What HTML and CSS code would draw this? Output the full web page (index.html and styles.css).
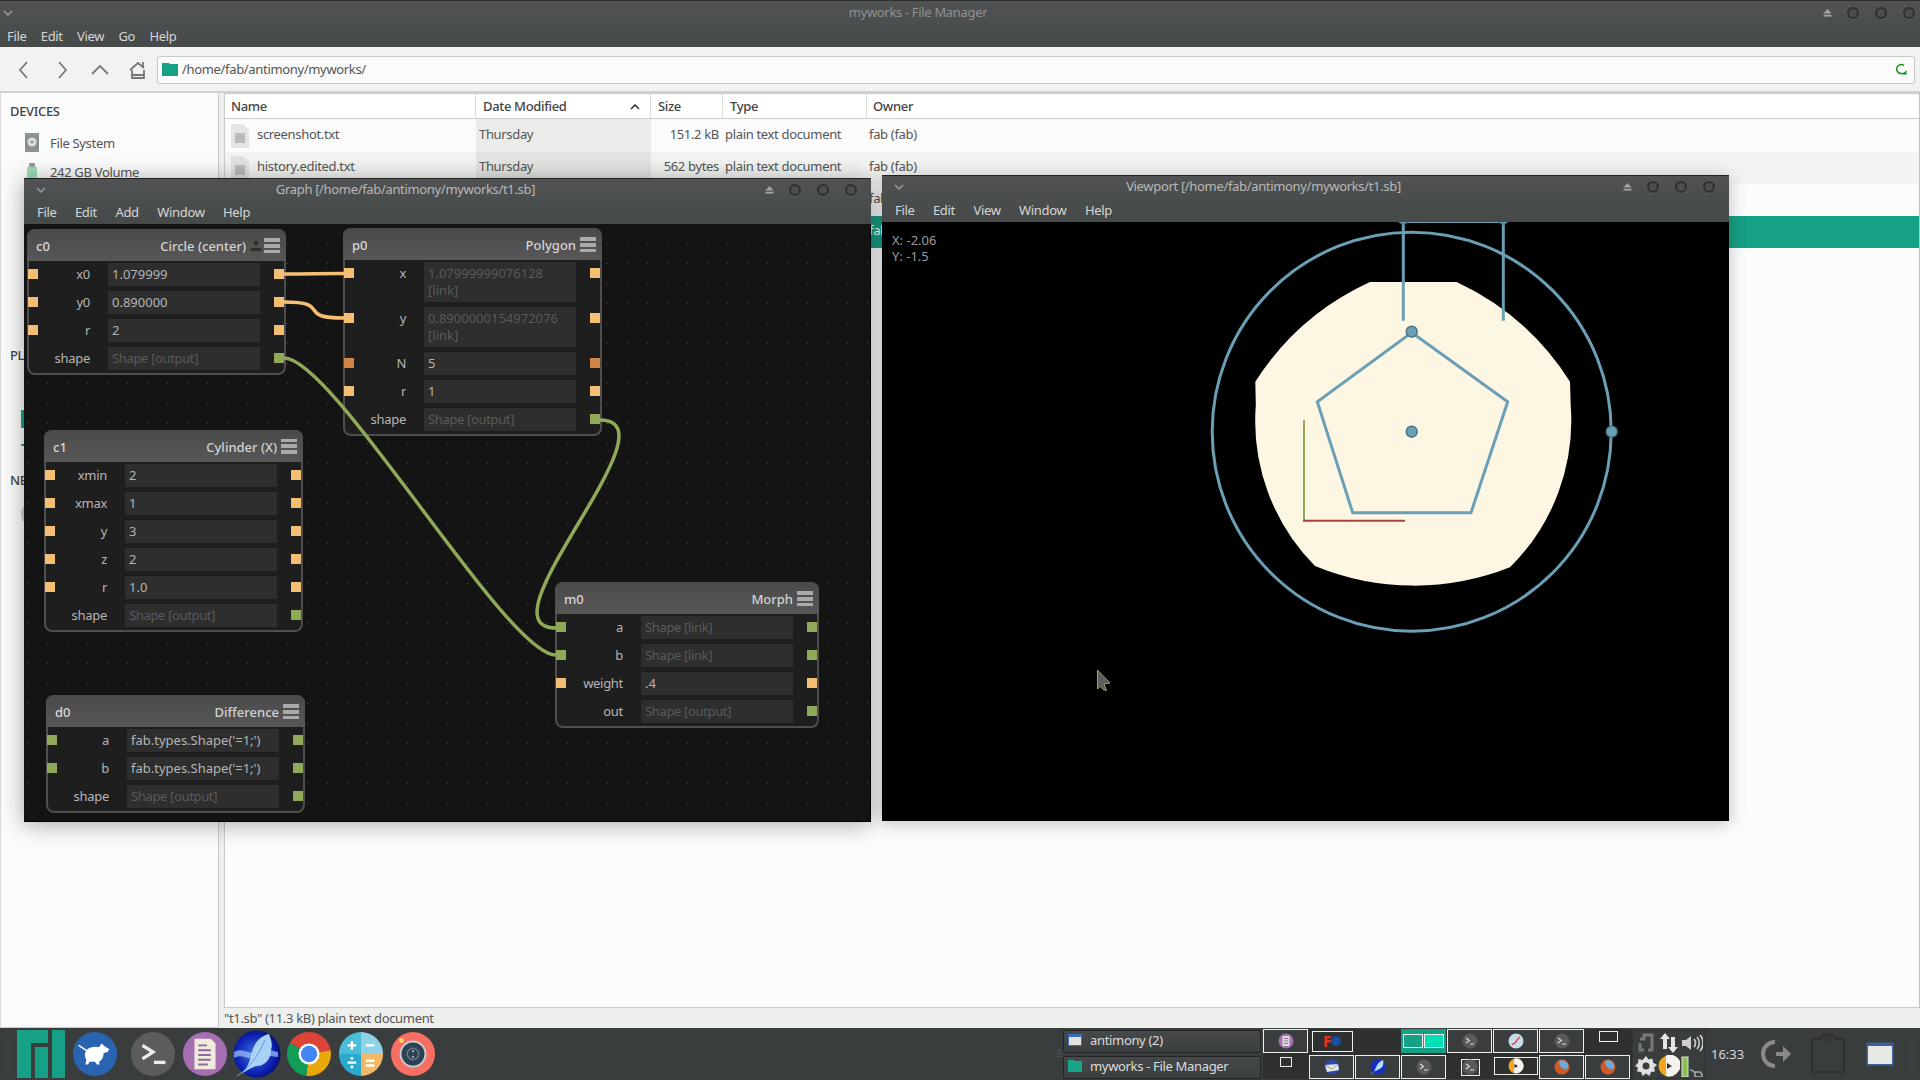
FILE: index.html
```html
<!DOCTYPE html>
<html lang="en">
<head>
<meta charset="utf-8">
<title>myworks - File Manager</title>
<link rel="stylesheet" href="styles.css">
</head>
<body>
<svg class="defs" aria-hidden="true">
  <symbol id="i-doc" viewBox="-8 -8 16 16"><circle r="7.500" fill="#a56fb2"/><path d="M-3.500-5H3.500V5H-3.500z" fill="#ddd"/><path d="M-2-2.500H2M-2 0H2M-2 2.500H2" stroke="#8d6a9a"/></symbol>
  <symbol id="i-term" viewBox="-8 -8 16 16"><circle r="7.500" fill="#5a5a5a"/><path d="M-4-3L-.5-.5-4 2M0 3H4" stroke="#ddd" stroke-width="1.100" fill="none"/></symbol>
  <symbol id="i-edit" viewBox="-8 -8 16 16"><circle r="7.500" fill="#c9dde8"/><path d="M-4 4c2-3 3-1 4-3s1-3 4-5M-1 2l3-4" stroke="#d0343a" stroke-width="1.200" fill="none"/></symbol>
  <symbol id="i-mail" viewBox="-8 -8 16 16"><circle r="7.500" fill="#2f47ad"/><path d="M-7-2L6-3 7 3-5 5z" fill="#e8e8df"/><path d="M-7-2L0 2 6-3" stroke="#777" stroke-width=".7" fill="none"/></symbol>
  <symbol id="i-sea" viewBox="-8 -8 16 16"><circle r="7.500" fill="#1530c0"/><path d="M-8 8C-4 6-3 3-2 0 0-4 2-6 5-7c1 3 0 7-2 8-2 2-6 2-11 7z" fill="#b9dcf7"/></symbol>
  <symbol id="i-fox" viewBox="-8 -8 16 16"><circle r="7.500" fill="#d05a26"/><path d="M-3-6C0-8 5-6 6-2c1 3-1 5-4 4C-1 1-3-2-3-6z" fill="#6bacdf"/></symbol>
  <symbol id="i-play" viewBox="-8 -8 16 16"><circle r="7.500" fill="#f2a51d"/><path d="M-2-7.300A7.500 7.500 0 0 1 5 5.500 7.500 7.500 0 0 1-2 7z" fill="#f5f3ee"/><path d="M-1.500-2L2 0-1.500 2z" fill="#222"/></symbol>
</svg>
<div class="desktop">
  <section class="fm">
    <header class="fm-head">
      <div class="titlebar">
        <svg class="chev" viewBox="0 0 10 6"><path d="M1 1l4 4 4-4"/></svg>
        <span class="title dim">myworks - File Manager</span>
        <div class="win-btns">
          <svg class="eject" viewBox="0 0 10 9"><path d="M5 0l4.500 5H.5z"/><rect x=".5" y="6.500" width="9" height="2"/></svg>
          <i class="dot"></i><i class="dot"></i><i class="dot"></i>
        </div>
      </div>
      <nav class="menu menu-fm"><span>File</span><span>Edit</span><span>View</span><span>Go</span><span>Help</span></nav>
    </header>
    <div class="toolbar">
      <div class="tools">
        <svg viewBox="0 0 20 20"><path d="M13 2L6 10l7 8"/></svg>
        <svg viewBox="0 0 20 20"><path d="M7 2l7 8-7 8"/></svg>
        <svg viewBox="0 0 20 20"><path d="M2 14l8-8 8 8"/></svg>
        <svg viewBox="0 0 20 20"><path d="M2 10l8-7 6 5M15 2v6M4 10v8h12v-8M4 15h12"/></svg>
      </div>
      <div class="address">
        <svg class="folder" viewBox="0 0 16 14"><path d="M0 1h7l1 1h8v12H0z"/></svg>
        <span class="path">/home/fab/antimony/myworks/</span>
        <svg class="reload" viewBox="0 0 12 12"><path d="M9 2.500A4.500 4.500 0 1 0 6 10.500h5"/><path class="fill" d="M11.500 7v4.500H7.500z"/></svg>
      </div>
    </div>
    <div class="fm-body">
      <aside class="sidebar">
        <h3 class="side-head">DEVICES</h3>
        <div class="side-item">
          <svg class="side-ico" viewBox="0 0 14 19"><rect width="14" height="19" fill="#8c9290"/><circle cx="7" cy="9" r="4.500" fill="#dde0de"/><circle cx="7" cy="9" r="1.500" fill="#8c9290"/></svg>
          <span>File System</span>
        </div>
        <div class="side-item">
          <svg class="side-ico" viewBox="0 0 14 19"><rect x="2" y="5" width="10" height="14" fill="#9adbb4"/><rect x="4" y="1" width="6" height="4" fill="#9a9a9a"/></svg>
          <span>242 GB Volume</span>
        </div>
        <h3 class="side-head side-places">PLACES</h3>
        <div class="side-mark"></div>
        <div class="side-mark side-mark-thin"></div>
        <h3 class="side-head side-net">NETWORK</h3>
        <div class="side-round"></div>
      </aside>
      <div class="list-pane">
        <div class="table">
          <div class="row row-head">
            <span class="c-name">Name</span>
            <span class="c-date">Date Modified<svg class="sort" viewBox="0 0 10 6"><path d="M1 5l4-4 4 4"/></svg></span>
            <span class="c-size">Size</span>
            <span class="c-type">Type</span>
            <span class="c-owner">Owner</span>
          </div>
          <div class="row odd">
            <span class="c-name"><svg class="file" viewBox="0 0 18 24"><path d="M0 0h12l6 6v18H0z" fill="#e4e5e4"/><rect x="4" y="9" width="10" height="10" fill="#b9bab9"/></svg>screenshot.txt</span>
            <span class="c-date shade1">Thursday</span>
            <span class="c-size num">151.2 kB</span>
            <span class="c-type">plain text document</span>
            <span class="c-owner">fab (fab)</span>
          </div>
          <div class="row even">
            <span class="c-name"><svg class="file" viewBox="0 0 18 24"><path d="M0 0h12l6 6v18H0z" fill="#e0e1e0"/><rect x="4" y="9" width="10" height="10" fill="#b9bab9"/></svg>history.edited.txt</span>
            <span class="c-date shade2">Thursday</span>
            <span class="c-size num">562 bytes</span>
            <span class="c-type">plain text document</span>
            <span class="c-owner">fab (fab)</span>
          </div>
          <div class="row odd">
            <span class="c-name"></span>
            <span class="c-date shade1"></span>
            <span class="c-size"></span>
            <span class="c-type"></span>
            <span class="c-owner">fab (fab)</span>
          </div>
          <div class="row selected">
            <span class="c-name"></span>
            <span class="c-date"></span>
            <span class="c-size"></span>
            <span class="c-type"></span>
            <span class="c-owner">fab (fab)</span>
          </div>
        </div>
        <div class="status">"t1.sb" (11.3 kB) plain text document</div>
      </div>
    </div>
  </section>

  <section class="window win-graph">
    <div class="titlebar">
      <svg class="chev" viewBox="0 0 10 6"><path d="M1 1l4 4 4-4"/></svg>
      <span class="title">Graph [/home/fab/antimony/myworks/t1.sb]</span>
      <div class="win-btns">
        <svg class="eject" viewBox="0 0 10 9"><path d="M5 0l4.500 5H.5z"/><rect x=".5" y="6.500" width="9" height="2"/></svg>
        <i class="dot"></i><i class="dot"></i><i class="dot"></i>
      </div>
    </div>
    <nav class="menu"><span>File</span><span>Edit</span><span>Add</span><span>Window</span><span>Help</span></nav>
    <div class="canvas">
      <article class="node node-c0">
        <header class="node-head"><b>c0</b><span class="node-type">Circle (center)</span><i class="lock"></i><i class="burger"></i></header>
        <div class="node-body">
          <div class="prow"><i class="port fl"></i><label>x0</label><div class="field">1.079999</div><i class="port fl"></i></div>
          <div class="prow"><i class="port fl"></i><label>y0</label><div class="field">0.890000</div><i class="port fl"></i></div>
          <div class="prow"><i class="port fl"></i><label>r</label><div class="field">2</div><i class="port fl"></i></div>
          <div class="prow"><i class="port hidden"></i><label>shape</label><div class="field off txt">Shape [output]</div><i class="port sh"></i></div>
        </div>
      </article>
      <article class="node node-p0">
        <header class="node-head"><b>p0</b><span class="node-type">Polygon</span><i class="burger"></i></header>
        <div class="node-body">
          <div class="prow"><i class="port fl"></i><label>x</label><div class="field off">1.07999999076128<br>[link]</div><i class="port fl"></i></div>
          <div class="prow"><i class="port fl"></i><label>y</label><div class="field off">0.8900000154972076<br>[link]</div><i class="port fl"></i></div>
          <div class="prow"><i class="port in"></i><label>N</label><div class="field">5</div><i class="port in"></i></div>
          <div class="prow"><i class="port fl"></i><label>r</label><div class="field">1</div><i class="port fl"></i></div>
          <div class="prow"><i class="port hidden"></i><label>shape</label><div class="field off txt">Shape [output]</div><i class="port sh"></i></div>
        </div>
      </article>
      <article class="node node-c1">
        <header class="node-head"><b>c1</b><span class="node-type">Cylinder (X)</span><i class="burger"></i></header>
        <div class="node-body">
          <div class="prow"><i class="port fl"></i><label>xmin</label><div class="field">2</div><i class="port fl"></i></div>
          <div class="prow"><i class="port fl"></i><label>xmax</label><div class="field">1</div><i class="port fl"></i></div>
          <div class="prow"><i class="port fl"></i><label>y</label><div class="field">3</div><i class="port fl"></i></div>
          <div class="prow"><i class="port fl"></i><label>z</label><div class="field">2</div><i class="port fl"></i></div>
          <div class="prow"><i class="port fl"></i><label>r</label><div class="field">1.0</div><i class="port fl"></i></div>
          <div class="prow"><i class="port hidden"></i><label>shape</label><div class="field off txt">Shape [output]</div><i class="port sh"></i></div>
        </div>
      </article>
      <article class="node node-d0">
        <header class="node-head"><b>d0</b><span class="node-type">Difference</span><i class="burger"></i></header>
        <div class="node-body">
          <div class="prow"><i class="port sh"></i><label>a</label><div class="field">fab.types.Shape('=1;')</div><i class="port sh"></i></div>
          <div class="prow"><i class="port sh"></i><label>b</label><div class="field">fab.types.Shape('=1;')</div><i class="port sh"></i></div>
          <div class="prow"><i class="port hidden"></i><label>shape</label><div class="field off txt">Shape [output]</div><i class="port sh"></i></div>
        </div>
      </article>
      <article class="node node-m0">
        <header class="node-head"><b>m0</b><span class="node-type">Morph</span><i class="burger"></i></header>
        <div class="node-body">
          <div class="prow"><i class="port sh"></i><label>a</label><div class="field off txt">Shape [link]</div><i class="port sh"></i></div>
          <div class="prow"><i class="port sh"></i><label>b</label><div class="field off txt">Shape [link]</div><i class="port sh"></i></div>
          <div class="prow"><i class="port fl"></i><label>weight</label><div class="field">.4</div><i class="port fl"></i></div>
          <div class="prow"><i class="port hidden"></i><label>out</label><div class="field off txt">Shape [output]</div><i class="port sh"></i></div>
        </div>
      </article>
      <svg class="wires" viewBox="24 224 847 598">
        <path class="w-o" d="M284 274C314 274 314 273.500 344 273.500"/>
        <path class="w-o" d="M284 302C334 302 294 318 344 318"/>
        <path class="w-g" d="M284 358C334 358 506 655 556 655"/>
        <path class="w-g" d="M600 420C680 420 476 628 556 628"/>
      </svg>
    </div>
  </section>

  <section class="window win-view">
    <div class="titlebar">
      <svg class="chev" viewBox="0 0 10 6"><path d="M1 1l4 4 4-4"/></svg>
      <span class="title">Viewport [/home/fab/antimony/myworks/t1.sb]</span>
      <div class="win-btns">
        <svg class="eject" viewBox="0 0 10 9"><path d="M5 0l4.500 5H.5z"/><rect x=".5" y="6.500" width="9" height="2"/></svg>
        <i class="dot"></i><i class="dot"></i><i class="dot"></i>
      </div>
    </div>
    <nav class="menu"><span>File</span><span>Edit</span><span>View</span><span>Window</span><span>Help</span></nav>
    <div class="view">
      <div class="coords">X: -2.06<br>Y: -1.5</div>
      <svg class="scene" viewBox="882 222 847 599">
        <path class="shape" d="M1370 282L1456.700 282A268 268 0 0 1 1570 381.700L1570.700 405A206 206 0 0 1 1510 567.300A260 260 0 0 1 1315 566A206 206 0 0 1 1255.800 405L1255.300 381.700A268 268 0 0 1 1370 282Z"/>
        <path class="ax-g" d="M1304 420v101.500"/>
        <path class="ax-r" d="M1303 520.700h102"/>
        <circle class="ln" cx="1411.700" cy="431.700" r="199.500"/>
        <polygon class="ln" points="1411.700,332.500 1507.700,401.700 1471,512.700 1352.700,512.700 1317.300,401.700"/>
        <path class="ln" d="M1403.300 222v98.700M1503.300 222v98.700"/>
        <path class="ln-thin" d="M1403.300 222.500h100"/>
        <circle class="hd" cx="1403.300" cy="219" r="5"/>
        <circle class="hd" cx="1503.300" cy="219" r="5"/>
        <circle class="hd" cx="1411.700" cy="331.700" r="5.500"/>
        <circle class="hd" cx="1411.700" cy="431.700" r="5.500"/>
        <circle class="hd" cx="1611.700" cy="431.700" r="5.500"/>
        <path class="cursor" d="M1097.500 670L1110 683L1104 684L1106.500 690.500L1103 689.500L1100.500 686L1097.500 689Z"/>
      </svg>
    </div>
  </section>

  <footer class="panel">
    <div class="grip"></div>
    <div class="dock">
      <svg class="manjaro" viewBox="0 0 48 48"><path d="M0 0h31v13H14v35H0zM18 17h13v31H18zM35 0h13v48H35z"/></svg>
      <svg class="app app-mouse" viewBox="-24 -24 48 48"><circle r="23" fill="#2a64b0"/><path d="M-17-9l9 6" stroke="#fff" stroke-width="1.500" fill="none"/><path d="M-9-4c4-4 10-4 13-3l3-4 3 3 5 3-2 3-4 1c0 4-2 8-5 9l1 3h-3l-2-3-6 0-1 3h-3l1-5c-2-3-2-7 0-10z" fill="#fff"/></svg>
      <svg class="app" viewBox="-24 -24 48 48"><circle r="23" fill="#5c5c5c"/><path d="M-11-9L0-2l-11 7" stroke="#ececec" stroke-width="3.500" fill="none"/><rect x="1" y="7" width="12" height="3.500" fill="#ececec"/></svg>
      <svg class="app" viewBox="-24 -24 48 48"><circle r="23" fill="#a56fb2"/><path d="M-11-16H6l5 5v27h-22z" fill="#efeadb"/><path d="M-7-9H2M-7-4H6M-7 1H6M-7 6H6M-7 11H3" stroke="#8d6a9a" stroke-width="2"/></svg>
      <svg class="app app-sea" viewBox="-24 -24 48 48"><defs><radialGradient id="sea" cx=".45" cy=".5" r=".6"><stop offset="0" stop-color="#3f6fe0"/><stop offset=".7" stop-color="#0a1fb0"/><stop offset="1" stop-color="#04085e"/></radialGradient></defs><circle r="23.500" fill="url(#sea)"/><path d="M-23-2c8-5 14 3 22 0s14-2 22 0v5c-8-1-14-2-22 1s-14-5-22 0z" fill="#9fc4f5" opacity=".7"/><path d="M-24 24C-12 20-8 10-6 2-4-8 0-17 12-20c2 6 4 10 2 16 0 8-5 16-15 16-8 3-14 8-23 12z" fill="#a9d2f5"/><path d="M-20 22C-8 14 0 4 8-14" stroke="#5f9ae0" stroke-width="1" fill="none"/></svg>
      <svg class="app" viewBox="-24 -24 48 48"><path d="M0 0L-20-11.500A23 23 0 0 1 22.600-4z" fill="#db4437"/><path d="M0 0L22.600-4A23 23 0 0 1-3 22.800z" fill="#e8a80c"/><path d="M0 0L-3 22.800A23 23 0 0 1-20-11.500z" fill="#0f9d58"/><circle r="11" fill="#fff"/><circle r="8.500" fill="#4285f4"/></svg>
      <svg class="app" viewBox="-24 -24 48 48"><path d="M0 0V-23A23 23 0 0 0-23 0z" fill="#4bbdd8"/><path d="M0 0V-23A23 23 0 0 1 23 0z" fill="#8cd3e8"/><path d="M0 0H-23A23 23 0 0 0 0 23z" fill="#2ba9cd"/><path d="M0 0H23A23 23 0 0 1 0 23z" fill="#f2b866"/><path d="M-14-9H-5M-9.500-13.500V-4.500M5-9H14M5 7H14M5 12H14M-14 9H-5" stroke="#fff" stroke-width="2.500" fill="none"/><circle cx="-9.500" cy="4.500" r="1.500" fill="#fff"/><circle cx="-9.500" cy="13.500" r="1.500" fill="#fff"/></svg>
      <svg class="app" viewBox="-24 -24 48 48"><circle r="23" fill="#f76e63"/><circle r="13" fill="#2d4152" stroke="#c7cfd4" stroke-width="2"/><circle r="6" fill="none" stroke="#66798a" stroke-width="1.500"/><circle cy="-3" r="1.200" fill="#aab"/><circle cy="3" r="1.200" fill="#aab"/><circle cx="-12" cy="-14" r="2.500" fill="#f7d75a"/></svg>
    </div>
    <div class="tasks">
      <i class="grip-small"></i>
      <div class="task-col">
        <div class="task"><svg viewBox="0 0 14 12"><rect width="14" height="12" fill="#3a6cc0"/><rect x="1" y="3" width="12" height="8" fill="#e5e5e0"/></svg>antimony (2)</div>
        <div class="task"><svg viewBox="0 0 14 12"><path d="M0 0h6l1 1h7v11H0z" fill="#17a589"/></svg>myworks - File Manager</div>
      </div>
    </div>
    <div class="pager">
      <div class="pager-row">
        <div class="cell boxed"><svg class="mini"><use href="#i-doc"/></svg></div>
        <div class="cell"><span class="box-in fbox"><b class="mini-f">F</b><i class="mini-gear"></i></span></div>
        <div class="cell"></div>
        <div class="cell cur"><span class="ws"></span><span class="ws ws-on"></span></div>
        <div class="cell boxed"><svg class="mini"><use href="#i-term"/></svg></div>
        <div class="cell boxed"><svg class="mini"><use href="#i-edit"/></svg></div>
        <div class="cell boxed"><svg class="mini"><use href="#i-term"/></svg></div>
        <div class="cell top"><span class="box-in small-wide"></span></div>
      </div>
      <div class="pager-row">
        <div class="cell top"><span class="box-in small-sq"></span></div>
        <div class="cell boxed"><svg class="mini"><use href="#i-mail"/></svg></div>
        <div class="cell boxed"><svg class="mini"><use href="#i-sea"/></svg></div>
        <div class="cell boxed"><svg class="mini"><use href="#i-term"/></svg></div>
        <div class="cell"><span class="box-in sbox"><svg class="mini"><use href="#i-term"/></svg></span></div>
        <div class="cell top"><span class="box-in ybox"><svg class="mini"><use href="#i-play"/></svg></span></div>
        <div class="cell boxed"><svg class="mini"><use href="#i-fox"/></svg></div>
        <div class="cell boxed"><svg class="mini"><use href="#i-fox"/></svg></div>
      </div>
    </div>
    <div class="tray">
      <svg viewBox="0 0 22 22"><path d="M5 7h4V3h8v15h-4M5 11v7h4" fill="none" stroke="#777" stroke-width="3"/></svg>
      <svg viewBox="0 0 22 22"><path d="M7 1l5 6H9v10H5V7H2zM15 21l-5-6h3V5h4v10h3z" fill="#e6e6e6"/></svg>
      <svg viewBox="0 0 22 22"><path d="M1 8h4l5-4v14l-5-4H1z" fill="#cfcfcf"/><path d="M13 7c2 2 2 6 0 8M16 5c3 3 3 9 0 12M19 3c4 4 4 12 0 16" stroke="#cfcfcf" stroke-width="1.600" fill="none"/></svg>
      <svg viewBox="0 0 22 22"><path d="M11 1l2.500 3.500 4-1 .5 4 4 2.500-3 2.500 1 4-4 .5-1.500 4-3.500-2.500-3.500 2.500-1.500-4-4-.5 1-4L0 11l3-3 .5-4 4 1z" fill="#e0e0e0"/><circle cx="11" cy="11" r="3.500" fill="#3a3d3d"/></svg>
      <svg viewBox="-11 -11 22 22"><circle r="10.500" fill="#f2a51d"/><path d="M-3-10.500A10.500 10.500 0 0 1 7.500 7.500 10.500 10.500 0 0 1-3 10z" fill="#f5f3ee"/><path d="M-2-3l5 3-5 3z" fill="#333"/></svg>
      <svg viewBox="0 0 22 22"><rect x="1" y="2" width="6" height="20" fill="#8cc152" stroke="#ddd"/><path d="M9 15c2 0 3 0 4 2h6l2 2v3h-7v-5" fill="none" stroke="#aaa" stroke-width="1.500"/></svg>
    </div>
    <div class="clock">16:33</div>
    <svg class="logout" viewBox="0 0 30 28"><path d="M14 2A12 12 0 0 0 14 26" fill="none" stroke="#8a8a8a" stroke-width="4"/><path d="M15 12h7V6l8 8-8 8v-6h-7z" fill="#8a8a8a"/></svg>
    <svg class="clip" viewBox="0 0 34 40"><path d="M1 5h9a7 5 0 0 1 14 0h9v33H1z" fill="none" stroke="#2b2d2d" stroke-width="1.500"/><circle cx="17" cy="5" r="2.500" fill="none" stroke="#2b2d2d"/></svg>
    <svg class="winicon" viewBox="0 0 28 24"><rect width="28" height="24" fill="#4a71b8" opacity=".35"/><rect x="1" y="1" width="26" height="22" fill="#3f6fc0" opacity=".6"/><rect x="2" y="4" width="24" height="18" fill="#e6e8e4"/></svg>
    <div class="grip grip-right"></div>
  </footer>
</div>
</body>
</html>
```
FILE: styles.css
```css
* { box-sizing: border-box; }
html, body { margin: 0; width: 1920px; height: 1080px; overflow: hidden; }
body { font-family: "Noto Sans", "Open Sans", sans-serif; font-size: 13px; letter-spacing: -.33px; color: #444; background: #eef0ee; }
.defs { position: absolute; width: 0; height: 0; }
.desktop { position: relative; width: 1920px; height: 1080px; display: flex; flex-direction: column; }

/* file manager */
.fm { height: 1028px; display: flex; flex-direction: column; }
.fm-head { height: 47px; background: linear-gradient(#505253, #464a49); border-top: 1px solid #2d2e2e; flex: none; }
.titlebar { position: relative; height: 22px; display: flex; align-items: center; justify-content: center; padding: 0 84px 2px 0; }
.fm-head .titlebar { height: 23px; }
.title { color: #b8b8b8; font-size: 13px; white-space: nowrap; }
.title.dim { color: #8f9090; }
.chev { position: absolute; left: 3px; top: 50%; width: 10px; height: 6px; margin-top: -3px; fill: none; stroke: #999; stroke-width: 1.500; }
.win-btns { position: absolute; right: 5px; top: 0; bottom: 0; display: flex; align-items: center; gap: 16px; }
.eject { width: 9px; height: 8px; fill: #a5a5a5; margin-right: -1px; }
.dot { display: block; width: 12px; height: 12px; border-radius: 50%; background: #4b4d4e; border: 2px solid #2e3030; box-shadow: 0 1px 0 #5a5c5c; }
.menu { height: 23px; display: flex; align-items: center; gap: 18.500px; padding-left: 13px; color: #d6d6d6; font-size: 13px; }
.menu-fm { gap: 14.300px; padding-left: 7px; }

.toolbar { height: 46px; flex: none; display: flex; align-items: center; background: #f1f3f1; border-bottom: 2px solid #cfd1cf; padding-top: 1px; }
.tools { display: flex; width: 157px; padding-left: 14px; gap: 18px; flex: none; }
.tools svg { width: 20px; height: 20px; fill: none; stroke: #777; stroke-width: 1.800; }
.address { flex: 1; margin-right: 5px; height: 28px; border: 1px solid #c8cac8; border-radius: 2px; background: #fafbfa; display: flex; align-items: center; padding: 0 7px 2px 4px; color: #555; }
.folder { width: 16px; height: 14px; fill: #16a085; margin-right: 4px; }
.path { flex: 1; }
.reload { width: 12px; height: 12px; fill: none; stroke: #15931f; stroke-width: 1.500; }
.reload .fill { fill: #15931f; stroke: none; }

.fm-body { flex: 1; display: flex; background: #eef0ee; min-height: 0; }
.sidebar { width: 219px; flex: none; position: relative; background: #fbfbfb; border-right: 1px solid #c9cbc9; border-left: 1px solid #d8d8d8; border-bottom: 1px solid #c9cbc9; padding: 9px 0 0 9px; }
.side-head { margin: 0; font-size: 13px; font-weight: 500; color: #444; line-height: 18px; }
.side-item { display: flex; align-items: center; gap: 11px; height: 29px; padding-left: 15px; color: #555; }
.side-item:first-of-type { margin-top: 8px; }
.side-ico { width: 14px; height: 19px; flex: none; }
.side-places { position: absolute; left: 9px; top: 253px; }
.side-net { position: absolute; left: 9px; top: 378px; }
.side-mark { position: absolute; left: 20px; top: 317px; width: 8px; height: 18px; background: #16a085; }
.side-mark-thin { top: 351px; height: 2px; }
.side-round { position: absolute; left: 20px; top: 412px; width: 10px; height: 18px; border-radius: 50%; background: #d9cfd3; }

.list-pane { flex: 1; display: flex; flex-direction: column; margin-left: 5px; min-width: 0; }
.table { flex: 1; background: #fbfcfb; border: 1px solid #c9cbc9; border-right-color: #c0c2c0; }
.row { display: grid; grid-template-columns: 251px 175px 72px 144px 1fr; height: 32px; align-items: stretch; color: #555; }
.row > span { display: flex; align-items: center; padding: 0 0 4px 3px; white-space: nowrap; }
.row > .c-owner { padding-left: 2px; }
.row-head { height: 25px; background: #fff; border-bottom: 1px solid #cdcfcd; color: #444; font-weight: 500; }
.row-head > span { border-right: 1px solid #dcdedc; padding: 0 0 0 7px; position: relative; }
.row-head .c-name { padding-left: 5px; }
.row-head > .c-owner { border-right: 0; padding-left: 6px; }
.row > .c-name { padding-left: 6px; }
.row > .c-type { padding-left: 2px; }
.row-head > .c-type { padding-left: 7px; }
.row-head + .row { height: 33px; }
.odd { background: #fafbfa; }
.even { background: #f2f4f2; }
.shade1 { background: #e9ece9; }
.shade2 { background: #e2e5e1; }
.row > .num { justify-content: flex-end; padding-right: 4px; }
.selected { background: #16a085; color: #fff; }
.file { width: 18px; height: 24px; margin: 4px 8px 0 0; flex: none; }
.sort { position: absolute; right: 10px; top: 10px; width: 10px; height: 6px; fill: none; stroke: #333; stroke-width: 1.600; }
.status { height: 20px; flex: none; line-height: 20px; color: #555; margin-top: -1px; padding-top: 1px; box-sizing: content-box; }

/* floating windows */
.window { position: absolute; display: flex; flex-direction: column; background: linear-gradient(#505253, #464a49 40px); border-top: 1px solid #222; box-shadow: 0 2px 22px rgba(0,0,0,.35); }
.win-graph { left: 24px; top: 178px; width: 847px; height: 644px; }
.win-graph .titlebar { height: 21px; }
.win-graph .menu { height: 24px; }
.win-view { left: 882px; top: 175px; width: 847px; height: 646px; box-shadow: 0 2px 16px rgba(0,0,0,.25); }
.win-view .titlebar { height: 22px; }
.win-view .menu { height: 24px; }
.window .chev { left: 12px; }
.window .win-btns { right: 14px; }

.canvas { position: relative; flex: 1; overflow: hidden; background-color: #141414; background-image: radial-gradient(circle at 3.500px 19.500px, #4a4a4a .8px, transparent 1px); background-size: 20px 20px; border-right: 1px solid #000; border-bottom: 1px solid #000; letter-spacing: 0; }
.wires { position: absolute; left: 0; top: 0; width: 847px; height: 598px; fill: none; pointer-events: none; }
.w-o { stroke: #f4bf75; stroke-width: 3.500; }
.w-g { stroke: #90a959; stroke-width: 3.500; }

/* nodes */
.node { position: absolute; display: flex; flex-direction: column; border-radius: 8px; background: #1e1e1e; border: 2px solid #4e4e4e; border-top: 0; color: #b5b5b5; }
.node-c0 { left: 3px; top: 5px; }
.node-p0 { left: 319px; top: 4px; }
.node-c1 { left: 20px; top: 206px; }
.node-d0 { left: 22px; top: 471px; }
.node-m0 { left: 531px; top: 358px; }
.node-head { height: 32px; margin: 0 -2px; padding: 1px 6px 0 9px; border-radius: 8px 8px 0 0; display: flex; align-items: center; background: linear-gradient(#4a4a4a, #575757); color: #d8d8d8; }
.node-head b { font-weight: 500; flex: 1; }
.node-type { font-weight: 500; color: #d2d2d2; }
.burger { display: block; width: 16px; height: 15px; margin-left: 4px; background: linear-gradient(#aaa 0 3.500px, transparent 3.500px 5.500px, #aaa 5.500px 9.500px, transparent 9.500px 11.500px, #aaa 11.500px); }
.lock { display: block; width: 10px; height: 11px; margin-left: 5px; margin-right: -1px; background: radial-gradient(circle at 5px 3px, #2e2e2e 2px, transparent 2.500px), linear-gradient(transparent 8px, #2e2e2e 8px); }
.node-body { display: flex; flex-direction: column; gap: 5px; padding: 1.500px 1px 3px 0; }
.prow { display: flex; align-items: flex-start; }
.port { display: block; width: 10px; height: 10px; margin: 6.500px -1px 0; flex: none; }
.port.fl { background: #f4bf75; }
.port.in { background: #d28445; }
.port.sh { background: #90a959; }
.port.hidden { visibility: hidden; }
.prow label { width: 52px; margin-right: 18px; text-align: right; line-height: 23px; margin-left: 1px; letter-spacing: -.3px; }
.node-m0 .prow label { width: 57px; }
.field { width: 152px; min-height: 23px; padding: 3px 4px; background: #2e2e2e; color: #b5b5b5; line-height: 17px; margin-right: 15px; white-space: nowrap; overflow: hidden; }
.field.off { color: #5a5a5a; }
.field.txt { letter-spacing: -.35px; }

/* viewport */
.view { position: relative; flex: 1; background: #000; overflow: hidden; letter-spacing: 0; }
.coords { position: absolute; left: 10px; top: 10px; color: #9a9a9a; font-size: 13px; line-height: 16px; }
.scene { display: block; width: 847px; height: 599px; }
.shape { fill: #fdf6e3; }
.ln { fill: none; stroke: #6a9fb5; stroke-width: 3; }
.ln-thin { fill: none; stroke: #6a9fb5; stroke-width: 1; }
.hd { fill: #6a9fb5; stroke: #4b7587; stroke-width: 1.500; }
.ax-g { stroke: #90a959; stroke-width: 2; }
.ax-r { stroke: #ac4142; stroke-width: 2; }
.cursor { fill: #5c5c5c; stroke: #90a959; stroke-width: 1; }

/* bottom panel */
.panel { height: 52px; flex: none; display: flex; align-items: center; background: #3a3d3d; position: relative; }
.grip { width: 6px; height: 27px; margin-left: 5px; flex: none; background-image: radial-gradient(circle, #555 .8px, transparent 1px); background-size: 3px 3px; }
.dock { display: flex; align-items: center; margin-left: 6px; width: 1040px; flex: none; }
.manjaro { width: 48px; height: 48px; fill: #16a085; margin-right: 7px; flex: none; }
.app { width: 46px; height: 46px; margin-right: 6px; flex: none; }
.app-mouse { margin-right: 12px; }
.app-sea { width: 48px; height: 48px; margin-right: 5px; margin-left: -1px; }
.tasks { display: flex; align-items: center; flex: none; }
.grip-small { display: block; width: 4px; height: 9px; margin-right: 2px; background: repeating-linear-gradient(#555 0 1px, transparent 1px 3px); }
.task-col { display: flex; flex-direction: column; gap: 3px; }
.task { width: 198px; height: 23px; display: flex; align-items: center; gap: 4px; padding: 0 0 2px 4px; font-size: 13px; color: #ddd; background: linear-gradient(#464949, #3c3f3f); border: 1px solid #232525; border-radius: 2px; }
.task svg { width: 14px; height: 12px; margin-right: 4px; flex: none; }
.pager { display: flex; flex-direction: column; gap: 2px; width: 369px; margin-left: 2px; flex: none; background: #2e3030; }
.pager-row { display: flex; height: 24px; }
.cell { width: 46px; flex: none; display: flex; align-items: center; justify-content: center; }
.boxed { width: 45px; margin-right: 1px; border: 1px solid #eee; background: #3a3d3d; }
.top { align-items: flex-start; padding-top: 2px; }
.box-in { display: flex; align-items: center; justify-content: center; border: 1px solid #eee; }
.fbox { width: 41px; height: 21px; background: #2e3030; }
.small-wide { width: 19px; height: 11px; }
.small-sq { width: 12px; height: 10px; }
.sbox { width: 19px; height: 17px; background: #3a3d3d; }
.ybox { width: 44px; height: 18px; }
.cur { background: #16a085; gap: 1px; padding: 2px; width: 45px; margin-right: 1px; }
.ws { flex: 1; height: 14px; background: #16a085; border: 1px solid #eee; }
.ws-on { background: #00e0b5; }
.mini { display: block; width: 16px; height: 16px; }
.mini-f { color: #e8301c; font-size: 15px; font-weight: 800; line-height: 15px; }
.mini-gear { display: block; width: 10px; height: 10px; background: #1a4f9c; border-radius: 50%; }
.tray { width: 73px; height: 49px; flex: none; display: grid; grid-template-columns: repeat(3, 22px); grid-template-rows: repeat(2, 22px); justify-content: center; align-content: center; gap: 1px; border: 1px solid #303333; background: #3a3d3d; }
.tray svg { width: 22px; height: 22px; }
.clock { width: 36px; margin-left: 6px; flex: none; color: #d8d8d8; font-size: 13px; white-space: nowrap; letter-spacing: 0; }
.logout { width: 30px; height: 28px; margin-left: 14px; flex: none; }
.clip { width: 34px; height: 40px; margin-left: 20px; flex: none; }
.winicon { width: 28px; height: 24px; margin-left: 21px; flex: none; }
.grip-right { margin-left: 15px; }
```
